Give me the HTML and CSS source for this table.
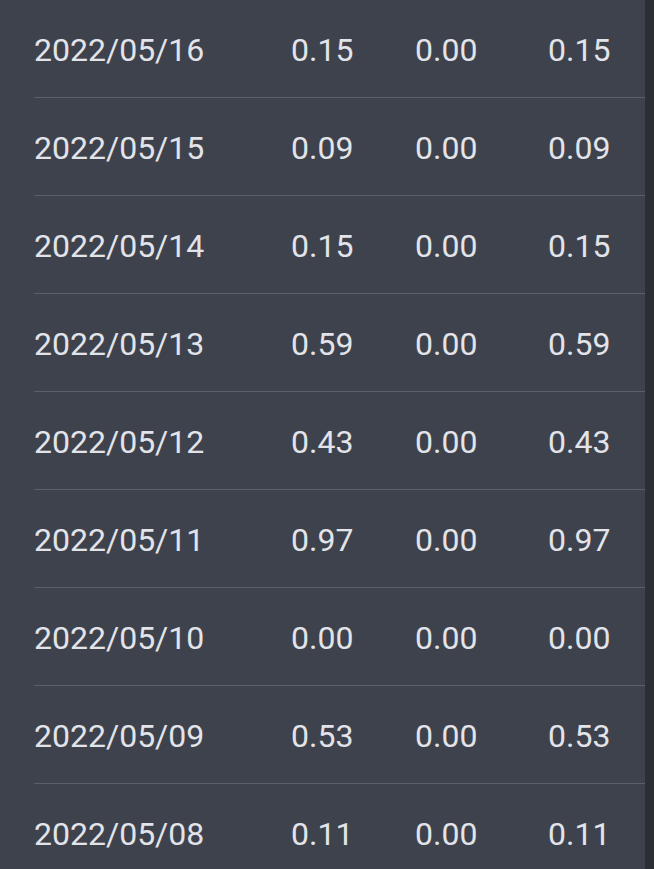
FILE: index.html
```html
<!DOCTYPE html>
<html>
<head>
<meta charset="utf-8">
<link rel="stylesheet" href="styles.css">
</head>
<body>
<div class="page">
  <div class="table">
    <div class="row"><span class="date">2022/05/16</span><span class="num">0.15</span><span class="num">0.00</span><span class="num">0.15</span></div>
    <div class="row"><span class="date">2022/05/15</span><span class="num">0.09</span><span class="num">0.00</span><span class="num">0.09</span></div>
    <div class="row"><span class="date">2022/05/14</span><span class="num">0.15</span><span class="num">0.00</span><span class="num">0.15</span></div>
    <div class="row"><span class="date">2022/05/13</span><span class="num">0.59</span><span class="num">0.00</span><span class="num">0.59</span></div>
    <div class="row"><span class="date">2022/05/12</span><span class="num">0.43</span><span class="num">0.00</span><span class="num">0.43</span></div>
    <div class="row"><span class="date">2022/05/11</span><span class="num">0.97</span><span class="num">0.00</span><span class="num">0.97</span></div>
    <div class="row"><span class="date">2022/05/10</span><span class="num">0.00</span><span class="num">0.00</span><span class="num">0.00</span></div>
    <div class="row"><span class="date">2022/05/09</span><span class="num">0.53</span><span class="num">0.00</span><span class="num">0.53</span></div>
    <div class="row"><span class="date">2022/05/08</span><span class="num">0.11</span><span class="num">0.00</span><span class="num">0.11</span></div>
  </div>
  <div class="edge"></div>
</div>
</body>
</html>
```
FILE: styles.css
```css
html, body {
  margin: 0;
  padding: 0;
  background: #3e424c;
  overflow: hidden;
}
.page {
  display: flex;
  width: 654px;
  height: 869px;
  overflow: hidden;
}
.table {
  width: 645px;
  flex: none;
}
.edge {
  flex: 1;
  background: #2c2e36;
}
.row {
  margin-left: 34px;
  height: 97px;
  box-sizing: content-box;
  border-bottom: 1px solid #5b5f69;
  display: grid;
  grid-template-columns: 257px 124px 133px 1fr;
  align-items: center;
  padding-top: 2px;
  height: 95px;
  font-family: Roboto, "Noto Sans", sans-serif;
  font-size: 32px;
  color: #e2e4ea;
}
.date {
  padding-left: 0;
}
```
